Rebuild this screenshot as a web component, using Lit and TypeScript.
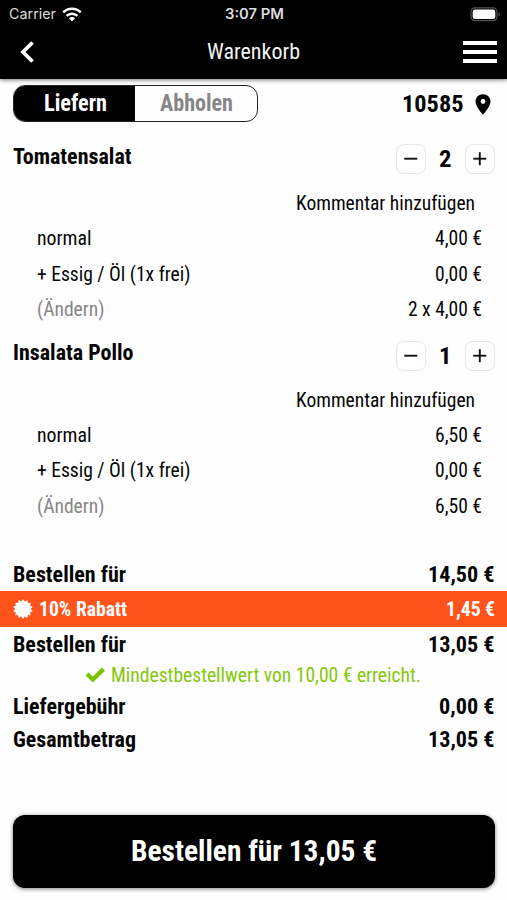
import { LitElement, html, css, svg } from "lit";
import { customElement, property } from "lit/decorators.js";

/** Text condensed horizontally to a given advance width. */
@customElement("fit-text")
class FitText extends LitElement {
  @property({ type: Number }) w = 0;
  @property() text = "";

  static styles = css`
    :host { display: inline-block; white-space: nowrap; flex: none; }
    .box { display: flex; }
    .ink { display: inline-block; flex: none; transform-origin: 0 50%; }
  `;

  updated() {
    const ink = this.renderRoot.querySelector(".ink") as HTMLElement;
    ink.style.transform = "none";
    const natural = ink.getBoundingClientRect().width;
    if (natural) ink.style.transform = `scaleX(${this.w / natural})`;
  }

  render() {
    return html`<div class="box" style="width:${this.w}px"><span class="ink">${this.text}</span></div>`;
  }
}

const t = (text: string, w: number) => html`<fit-text .text=${text} .w=${w}></fit-text>`;

interface Line { label: string; lw: number; price: string; pw: number; muted?: boolean; }
interface Item { name: string; nw: number; qty: string; qw: number; lines: Line[]; }

const items: Item[] = [
  {
    name: "Tomatensalat", nw: 118.5, qty: "2", qw: 12.5,
    lines: [
      { label: "normal", lw: 54.5, price: "4,00 €", pw: 47 },
      { label: "+ Essig / Öl (1x frei)", lw: 153.5, price: "0,00 €", pw: 47 },
      { label: "(Ändern)", lw: 67.5, price: "2 x 4,00 €", pw: 74, muted: true },
    ],
  },
  {
    name: "Insalata Pollo", nw: 120.5, qty: "1", qw: 12.5,
    lines: [
      { label: "normal", lw: 54.5, price: "6,50 €", pw: 47 },
      { label: "+ Essig / Öl (1x frei)", lw: 153.5, price: "0,00 €", pw: 47 },
      { label: "(Ändern)", lw: 67.5, price: "6,50 €", pw: 47, muted: true },
    ],
  },
];

/** Outline of a badge with a toothed edge. */
const burst = (teeth: number, outer: number, inner: number) =>
  Array.from({ length: teeth * 2 }, (_, i) => {
    const r = i % 2 ? inner : outer;
    const a = (Math.PI * i) / teeth - Math.PI / 2;
    return `${(10 + r * Math.cos(a)).toFixed(2)},${(10 + r * Math.sin(a)).toFixed(2)}`;
  }).join(" ");

@customElement("app-root")
class AppRoot extends LitElement {
  static styles = css`
    :host {
      display: flex; flex-direction: column; width: 507px; height: 900px; overflow: hidden;
      background: #fefefe; color: #050505; box-sizing: border-box;
      font-family: "Roboto Condensed", Roboto, "Liberation Sans", sans-serif;
      font-stretch: 75%; font-size: 20px; line-height: 24px;
    }
    * { box-sizing: border-box; }
    svg { display: block; flex: none; }
    .top { flex: none; height: 79px; background: #000; color: #fff; box-shadow: 0 1px 4px rgba(0,0,0,.55); }
    .status {
      display: grid; grid-template-columns: 1fr auto 1fr; align-items: center; height: 28px;
      padding: 0 6px 0 9px; font-family: Inter, Roboto, sans-serif; font-stretch: 100%; font-size: 14.5px; line-height: 20px; color: #dcdcdc;
    }
    .carrier { display: flex; align-items: center; gap: 6px; }
    .time { font-weight: 600; font-size: 14px; margin-right: 2px; }
    .battery { justify-self: end; }
    .nav { display: grid; grid-template-columns: 1fr auto 1fr; align-items: center; height: 48px; padding: 0 10.5px 0 19px; }
    .title { font-size: 22px; color: #f4f4f4; margin-right: 8px; }
    .menu { justify-self: end; display: flex; flex-direction: column; gap: 5.5px; width: 33.5px; }
    .bar { height: 3.8px; background: #fff; }
    .mode { display: flex; flex: none; justify-content: space-between; align-items: center; height: 51.3px; padding: 0 15.5px 2px 13px; }
    .segment { display: flex; width: 244.5px; height: 37px; border: 1.2px solid #222; border-radius: 12px; overflow: hidden; font-size: 23px; font-weight: 700; }
    .seg { display: flex; align-items: center; justify-content: center; flex: 1; padding-left: 1px; color: #868686; }
    .seg.on { background: #000; color: #fff; }
    .zip { display: flex; align-items: center; gap: 11px; padding-top: 1px; font-size: 24px; font-weight: 700; }
    .item { flex: none; height: 196.6px; }
    .head { display: flex; justify-content: space-between; height: 55.1px; padding: 14px 12.5px 0 13px; }
    .name { padding-top: .4px; font-size: 22px; font-weight: 700; }
    .stepper { display: flex; align-items: center; height: 30px; }
    .btn { display: flex; align-items: center; justify-content: center; width: 30px; height: 30px; border: 1px solid #e6e6e6; border-radius: 8px; background: #fff; }
    .qty { display: flex; justify-content: center; width: 38.5px; font-size: 24px; font-weight: 700; }
    .line { display: flex; align-items: center; justify-content: space-between; height: 35.4px; padding: 0 25px 0 37.3px; }
    .line.comment { justify-content: flex-end; padding-right: 32px; }
    .muted { color: #868686; }
    .sums { flex: none; margin-top: 33.5px; }
    .sum { display: flex; align-items: center; justify-content: space-between; height: 33px; padding: 0 12.5px 0 13px; font-size: 22.5px; font-weight: 700; }
    .sum.first { height: 34px; }
    .rebate { display: flex; align-items: center; justify-content: space-between; height: 36.5px; padding: 0 12.5px; background: #ff531c; color: #fff; font-size: 20px; font-weight: 700; }
    .tag { display: flex; align-items: center; gap: 6px; }
    .ok { display: flex; align-items: center; justify-content: center; gap: 5px; height: 29px; padding-right: 1px; color: #86c70c; }
    .order {
      display: flex; align-items: center; justify-content: center; flex: none; height: 73px; margin: 59.5px 12.5px 0 13px;
      border-radius: 12px; background: #000; color: #fff; font-size: 29.5px; font-weight: 700;
      box-shadow: 0 1px 4px rgba(0,0,0,.5);
    }
  `;

  private line(l: Line) {
    return html`<div class="line">
      <span class=${l.muted ? "muted" : ""}>${t(l.label, l.lw)}</span><span>${t(l.price, l.pw)}</span>
    </div>`;
  }

  private sign(plus: boolean) {
    return html`<svg width="14" height="14" viewBox="0 0 14 14" fill="none" stroke="#111" stroke-width="1.9">
      <path d="M.3 6.700h13" />${plus ? svg`<path d="M6.800 .2v13" />` : ""}
    </svg>`;
  }

  private item(i: Item) {
    return html`<section class="item">
      <div class="head">
        <div class="name">${t(i.name, i.nw)}</div>
        <div class="stepper">
          <div class="btn">${this.sign(false)}</div>
          <div class="qty">${t(i.qty, i.qw)}</div>
          <div class="btn">${this.sign(true)}</div>
        </div>
      </div>
      <div class="line comment">${t("Kommentar hinzufügen", 179)}</div>
      ${i.lines.map((l) => this.line(l))}
    </section>`;
  }

  render() {
    return html`
      <header class="top">
        <div class="status">
          <div class="carrier">
            ${t("Carrier", 47)}
            <svg width="20" height="15" viewBox="0 0 20 15" fill="none" stroke="#fff" stroke-width="2.5">
              <path d="M1.3 5.3C6 .6 14 .6 18.7 5.3" /><path d="M4.6 8.8c3.1-2.9 7.7-2.9 10.8 0" />
              <path d="M10 14.5 6.9 11.2c1.8-1.6 4.4-1.6 6.2 0z" fill="#fff" stroke="none" />
            </svg>
          </div>
          <div class="time">${t("3:07 PM", 59)}</div>
          <svg class="battery" width="31" height="15" viewBox="0 0 31 15">
            <rect x="1" y=".9" width="26" height="12.8" rx="4" fill="none" stroke="#555" stroke-width="1.2" />
            <rect x="2.7" y="2.5" width="22.6" height="9.6" rx="2.4" fill="#fff" />
            <path d="M28.5 5.2c2 .8 2 3.4 0 4.2z" fill="#555" />
          </svg>
        </div>
        <div class="nav">
          <svg width="17" height="22" viewBox="0 0 17 22" fill="none" stroke="#fff" stroke-width="3.8"><path d="M13.500 1.500 4 11l9.500 9.500" /></svg>
          <div class="title">${t("Warenkorb", 93)}</div>
          <div class="menu"><div class="bar"></div><div class="bar"></div><div class="bar"></div></div>
        </div>
      </header>
      <div class="mode">
        <div class="segment">
          <div class="seg on">${t("Liefern", 63)}</div>
          <div class="seg">${t("Abholen", 73)}</div>
        </div>
        <div class="zip">
          ${t("10585", 61.5)}
          <svg width="17" height="21" viewBox="0 0 17 21"><path fill="#050505" fill-rule="evenodd" d="M8 .2C3.700.2.5 3.400.5 7.500.5 12.700 8 20.700 8 20.700s7.500-8 7.500-13.200C15.500 3.400 12.300.2 8 .2zm0 4.900a2.400 2.400 0 1 1 0 4.800 2.400 2.400 0 0 1 0-4.800z" /></svg>
        </div>
      </div>
      ${items.map((i) => this.item(i))}
      <section class="sums">
        <div class="sum first">${t("Bestellen für", 113)}${t("14,50 €", 66.5)}</div>
        <div class="rebate">
          <div class="tag">
            <svg width="20" height="20" viewBox="0 0 20 20"><polygon fill="#fff" points=${burst(14, 10, 7.8)} /></svg>
            ${t("10% Rabatt", 88)}
          </div>
          ${t("1,45 €", 49)}
        </div>
        <div class="sum">${t("Bestellen für", 113)}${t("13,05 €", 66.5)}</div>
        <div class="ok">
          <svg width="21" height="16" viewBox="0 0 21 16"><path fill="#7cc400" d="M.5 8.600 3.600 5.500 7.800 9.500 16.800.6l3.200 3.200L7.800 15.600z" /></svg>
          ${t("Mindestbestellwert von 10,00 € erreicht.", 310)}
        </div>
        <div class="sum">${t("Liefergebühr", 112.5)}${t("0,00 €", 55.5)}</div>
        <div class="sum">${t("Gesamtbetrag", 123)}${t("13,05 €", 66.5)}</div>
      </section>
      <div class="order">${t("Bestellen für 13,05 €", 246)}</div>
    `;
  }
}
